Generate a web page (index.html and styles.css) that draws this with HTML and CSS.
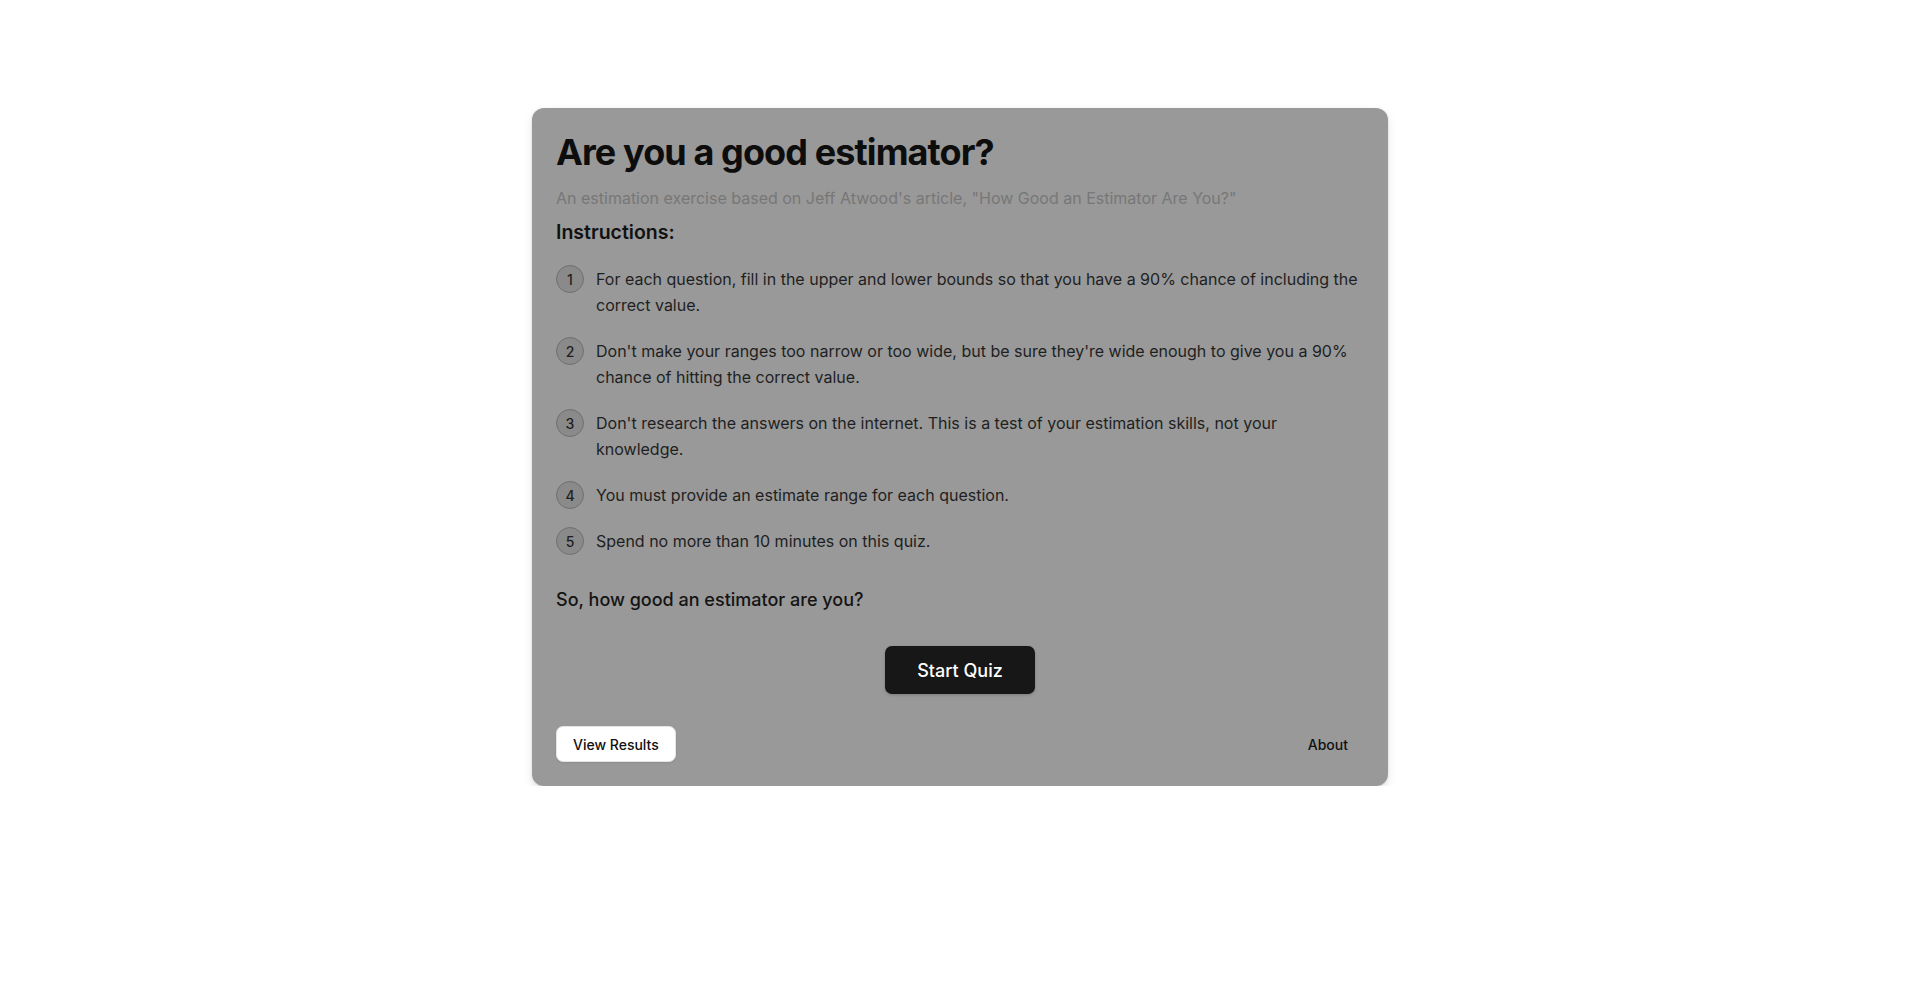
FILE: index.html
```html
<!DOCTYPE html>
<html lang="en">
<head>
<meta charset="utf-8">
<title>Are you a good estimator?</title>
<link rel="stylesheet" href="styles.css">
</head>
<body>
<main class="page">
  <section class="card">
    <h1 class="title">Are you a good estimator?</h1>
    <p class="subtitle">An estimation exercise based on Jeff Atwood's article, "How Good an Estimator Are You?"</p>
    <h2 class="section-title">Instructions:</h2>
    <ol class="steps">
      <li class="step"><span class="num">1</span><span class="step-text">For each question, fill in the upper and lower bounds so that you have a 90% chance of including the correct value.</span></li>
      <li class="step"><span class="num">2</span><span class="step-text">Don't make your ranges too narrow or too wide, but be sure they're wide enough to give you a 90% chance of hitting the correct value.</span></li>
      <li class="step"><span class="num">3</span><span class="step-text">Don't research the answers on the internet. This is a test of your estimation skills, not your knowledge.</span></li>
      <li class="step"><span class="num">4</span><span class="step-text">You must provide an estimate range for each question.</span></li>
      <li class="step"><span class="num">5</span><span class="step-text">Spend no more than 10 minutes on this quiz.</span></li>
    </ol>
    <p class="question">So, how good an estimator are you?</p>
    <div class="start-row">
      <button class="btn-primary" type="button">Start Quiz</button>
    </div>
    <div class="footer">
      <button class="btn-white" type="button">View Results</button>
      <button class="btn-ghost" type="button">About</button>
    </div>
  </section>
</main>
</body>
</html>
```

FILE: styles.css
```css
* { box-sizing: border-box; }

html, body {
  margin: 0;
  padding: 0;
  background: #ffffff;
  font-family: Inter, "Noto Sans", "Liberation Sans", sans-serif;
  color: #1a1a1a;
}

.page {
  display: flex;
  justify-content: center;
  padding-top: 108px;
}

.card {
  width: 856px;
  background: #999999;
  border-radius: 12px;
  padding: 24px;
  box-shadow: 0 4px 10px rgba(0, 0, 0, 0.10), 0 1px 3px rgba(0, 0, 0, 0.08);
}

.title {
  margin: 0;
  font-size: 36px;
  line-height: 40px;
  font-weight: 700;
  letter-spacing: -0.9px;
  color: #0d0d0d;
}

.subtitle {
  margin: 14px 0 0;
  font-size: 16px;
  line-height: 24px;
  color: #777777;
}

.section-title {
  margin: 8px 0 0;
  font-size: 19.5px;
  line-height: 28px;
  font-weight: 600;
  color: #111111;
}

.steps {
  list-style: none;
  margin: 20px 0 0;
  padding: 0;
  display: flex;
  flex-direction: column;
  gap: 20px;
}

.step {
  display: flex;
  align-items: flex-start;
  gap: 12px;
}

.num {
  flex: 0 0 28px;
  width: 28px;
  height: 28px;
  margin: -1px 0;
  border-radius: 50%;
  background: #8a8a8a;
  border: 1px solid #707070;
  display: flex;
  align-items: center;
  justify-content: center;
  font-size: 14px;
  font-weight: 500;
  color: #1f1f1f;
}

.step-text {
  font-size: 16px;
  line-height: 26px;
  color: #1f1f1f;
}

.question {
  margin: 32px 0 0;
  font-size: 18px;
  line-height: 28px;
  font-weight: 500;
  color: #141414;
}

.start-row {
  display: flex;
  justify-content: center;
  margin-top: 32px;
}

.btn-primary {
  font-family: inherit;
  height: 48px;
  padding: 0 32px;
  border: none;
  border-radius: 7px;
  background: #171717;
  color: #ffffff;
  font-size: 18px;
  font-weight: 500;
  box-shadow: 0 1px 3px rgba(0, 0, 0, 0.2);
}

.footer {
  display: flex;
  justify-content: space-between;
  align-items: center;
  margin-top: 32px;
}

.btn-white,
.btn-ghost {
  font-family: inherit;
  height: 36px;
  padding: 0 16px;
  border-radius: 7px;
  font-size: 14px;
  font-weight: 500;
  color: #111111;
}

.btn-white {
  background: #ffffff;
  border: 1px solid #e4e4e4;
  box-shadow: 0 1px 2px rgba(0, 0, 0, 0.08);
}

.btn-ghost {
  background: transparent;
  border: none;
}
```
